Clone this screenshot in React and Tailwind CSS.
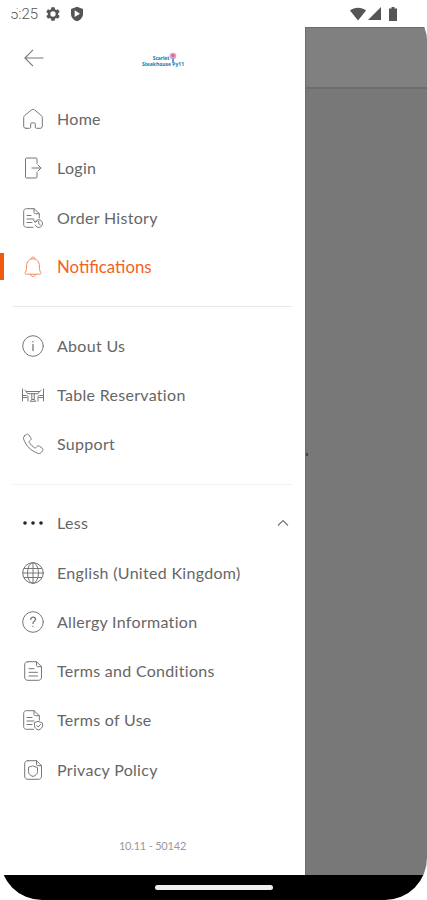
import React from "react";

function Icon({ children, className = "text-[#777]" }) {
  return (
    <svg
      viewBox="0 0 24 24"
      className={`h-6 w-6 shrink-0 ${className}`}
      fill="none"
      stroke="currentColor"
      strokeWidth="1"
      strokeLinecap="round"
      strokeLinejoin="round"
    >
      {children}
    </svg>
  );
}

const HomeIcon = () => (
  <Icon>
    <path d="M5 21.300h3.600c.8 0 1.100-.4 1.100-1.100v-3.400c0-.6.300-.9.900-.9h2.800c.6 0 .9.300.9.900v3.400c0 .7.300 1.100 1.100 1.100H19c1.500 0 2.300-.8 2.300-2.300v-8.500c0-.8-.3-1.400-.9-1.900l-6.700-5.600c-1.100-.9-2.300-.9-3.400 0L3.600 8.600c-.6.500-.9 1.100-.9 1.900V19c0 1.500.8 2.300 2.300 2.300z" />
  </Icon>
);
const LoginIcon = () => (
  <Icon>
    <path d="M16 7.500V3c0-.7-.4-1-1-1H5.500c-.7 0-1 .4-1 1v18c0 .6.400 1 1 1H15c.6 0 1-.4 1-1v-4.500M11 12h9M17 9l3 3-3 3" />
  </Icon>
);
const OrderIcon = () => (
  <Icon>
    <path d="M12 21.300H5.500c-1.800 0-2.800-1-2.800-2.800v-13c0-1.800 1-2.800 2.800-2.800H13l5.300 5V12M13 2.700v3.500c0 1 .5 1.500 1.500 1.500h3.800M6 9.500h4M6 13h7M6 16.500h5" />
    <path d="M14.500 15.200a3.900 3.900 0 1 1-.5 3.900M17.700 15.200v2.500l1.500 1M12.700 14.300l1.300 2 2-1.200" />
  </Icon>
);
const BellIcon = () => (
  <Icon className="text-[#f58a5c]">
    <path d="M5 19.200c-.9 0-1.300-1-.8-1.700 1.300-1.900 1.400-3.200 1.400-6.500 0-4.200 2.600-7.200 6.400-7.200s6.400 3 6.400 7.200c0 3.300.1 4.600 1.400 6.500.5.700.1 1.700-.8 1.700zM10 4c.1-2.700 3.900-2.700 4 0M9.500 19.500c.3 2.800 4.700 2.800 5 0" />
  </Icon>
);
const InfoIcon = () => (
  <Icon>
    <circle cx="12" cy="12" r="10.300" />
    <path d="M12 10.500v6M12 7.300v.5" strokeWidth="1.300" />
  </Icon>
);
const TableIcon = () => (
  <Icon>
    <path d="M1.500 6v12M1.500 12.500h4c1 0 1.500.5 1.500 1.500v4M1.500 14.500H6M22.500 6v12M22.500 12.500h-4c-1 0-1.500.5-1.500 1.500v4M22.500 14.500H18M5.500 8.500h13l-1.500 2.200H7zM10.800 10.700v5.800M13.200 10.700v5.800M9.500 18l1.300-1.500h2.400l1.300 1.500zM4 7.500l1.500 1M20 7.500l-1.500 1" />
  </Icon>
);
const PhoneIcon = () => (
  <Icon>
    <path d="M3.500 3.900 5.300 2.500c.8-.6 1.800-.5 2.400.3l2.100 2.900c.6.8.4 1.800-.3 2.400l-.9.700c-.6.500-.7 1.200-.2 1.900 1.400 2.100 3 3.700 5 5 .7.500 1.400.3 1.900-.3l.7-.9c.6-.8 1.600-.9 2.400-.3l2.900 2.100c.8.600.9 1.600.3 2.400l-1.400 1.800c-.8 1.100-2 1.300-3.400.8C9.900 18.800 5.200 14.100 2.700 7.200c-.5-1.400-.3-2.500.8-3.300z" />
  </Icon>
);
const DotsIcon = () => (
  <Icon className="text-[#222]">
    <g fill="currentColor" stroke="none">
      <circle cx="4" cy="12" r="1.800" />
      <circle cx="12" cy="12" r="1.800" />
      <circle cx="20" cy="12" r="1.800" />
    </g>
  </Icon>
);
const GlobeIcon = () => (
  <Icon>
    <circle cx="12" cy="12" r="10.300" />
    <ellipse cx="12" cy="12" rx="5.500" ry="10.300" />
    <path d="M12 1.700v20.600M1.700 12h20.600M3.300 7.500h17.400M3.300 16.500h17.400" />
  </Icon>
);
const HelpIcon = () => (
  <Icon>
    <circle cx="12" cy="12" r="10.300" />
    <path d="M9.700 9.500c0-3.300 4.800-3.100 4.800-.2 0 2-2.500 2.100-2.500 4.200M12 16.300v.3" strokeWidth="1.300" />
  </Icon>
);
const DocumentIcon = () => (
  <Icon>
    <path d="M7 2.700h8.500l5 5V18c0 2.300-1 3.300-3.300 3.300H7c-2.300 0-3.300-1-3.300-3.300V6c0-2.300 1-3.300 3.300-3.300zM15.500 2.700v3.500c0 1 .5 1.500 1.500 1.500h3.500M8 9.700h5M8 13.300h8.500M8 17h8.500" />
  </Icon>
);
const TermsIcon = () => (
  <Icon>
    <path d="M12.500 21.300h-7c-1.800 0-2.800-1-2.800-2.800v-13c0-1.800 1-2.800 2.800-2.800H13l5.300 5v4.500M13 2.700v3.500c0 1 .5 1.500 1.500 1.500h3.800M6 9.500h5M6 13h7M6 16.500h5" />
    <path d="m17.500 13.500 4 1.500v2.700c0 2-1.600 3.300-4 4.300-2.400-1-4-2.300-4-4.300V15zM15.700 17.700l1.400 1.300 2.500-2.700" />
  </Icon>
);
const PrivacyIcon = () => (
  <Icon>
    <path d="M7 2.700h8.500l5 5V18c0 2.300-1 3.300-3.300 3.300H7c-2.300 0-3.300-1-3.300-3.300V6c0-2.300 1-3.300 3.300-3.300zM15.500 2.700v3.500c0 1 .5 1.500 1.500 1.500h3.500" />
    <path d="m12 8 4.500 1.700v4c0 2.300-1.800 3.800-4.500 4.800-2.700-1-4.500-2.500-4.500-4.800v-4z" />
  </Icon>
);

function Row({ icon: Glyph, label, active, trailing }) {
  return (
    <li className="relative flex h-[49.300px] items-center pr-[14px] pl-[21px]">
      {active && <span className="absolute top-[11px] left-0 h-[27px] w-1 bg-[#f05a0c]" />}
      <Glyph />
      <span
        className={`ml-3 flex-1 whitespace-nowrap ${
          active ? "text-[16.800px] text-[#f26322]" : "text-base tracking-[0.3px] text-[#666]"
        }`}
      >
        {label}
      </span>
      {trailing}
    </li>
  );
}

const Chevron = () => (
  <svg viewBox="0 0 16 16" className="h-4 w-4 text-[#777]" fill="none" stroke="currentColor" strokeWidth="1.200">
    <path d="m3 10.500 5-5 5 5" />
  </svg>
);

function StatusBar() {
  return (
    <header className="flex h-[27px] items-center pl-[10px] text-[#555]">
      <span className="mt-0.5 w-[29px] font-[Roboto] text-[15px] font-light">5:25</span>
      <svg viewBox="0 0 24 24" className="ml-[6px] h-4 w-4" fill="currentColor">
        <path
          fillRule="evenodd"
          d="M9.500 2h5l.5 3 1.700 1 2.900-1.200 2.400 4.200-2.300 2v2l2.300 2-2.400 4.200-2.900-1.200-1.700 1-.5 3h-5L9 19l-1.700-1-2.900 1.200L2 15l2.300-2v-2L2 9l2.400-4.200L7.300 6 9 5zM12 8a4 4 0 1 0 0 8 4 4 0 0 0 0-8z"
        />
      </svg>
      <svg viewBox="0 0 24 24" className="ml-2 h-4 w-4" fill="currentColor">
        <path fillRule="evenodd" d="m12 1 9 3.500V12c0 5.200-4 9.300-9 11-5-1.700-9-5.800-9-11V4.500zM8.500 6.500v10l8-5z" />
      </svg>
      <span className="flex-1" />
      <svg viewBox="0 0 16 14" className="h-[14px] w-4" fill="currentColor">
        <path d="M0 3.500C4.500-.1 11.500-.1 16 3.500L8 13.500z" />
      </svg>
      <svg viewBox="0 0 13 13" className="ml-[2px] h-[13px] w-[13px]" fill="currentColor">
        <path d="M13 0v13H0z" />
      </svg>
      <svg viewBox="0 0 8 14" className="mr-[30px] ml-2 h-[14px] w-2" fill="currentColor">
        <path d="M2.500 0h3v1.500H8V14H0V1.500h2.500z" />
      </svg>
    </header>
  );
}

function Logo() {
  return (
    <div className="relative flex w-[44px] flex-col items-center font-['Open_Sans'] font-bold text-[#1478aa]">
      <span className="mr-1 h-[5px] text-[5px] leading-[5px] tracking-tight">Scarlet</span>
      <span className="h-[6px] text-[5px] leading-[6px] whitespace-nowrap">Steakhouse Py11</span>
      <svg viewBox="0 0 8 12" className="absolute -top-[4px] left-[28px] h-3 w-2">
        <circle cx="4" cy="4" r="3.300" fill="#d6a5ce" />
        <circle cx="4" cy="3.500" r="1.500" fill="#e85d96" />
        <path d="M3 6.500h2V11H3z" fill="#6b9bcc" />
      </svg>
    </div>
  );
}

export default function App() {
  return (
    <div className="h-[900px] w-[427px] bg-white">
      <div className="flex h-full flex-col overflow-hidden rounded-[42px] bg-white font-[Lato,sans-serif]">
        <StatusBar />
        <main className="flex h-[848px]">
          <nav className="flex w-[305px] flex-col bg-white">
            <div className="flex h-[67.500px] items-start">
              <svg viewBox="0 0 20 18" className="mt-[22px] ml-6 h-[18px] w-5 text-[#777]" fill="none" stroke="currentColor" strokeWidth="1.100">
                <path d="M9 .8.900 9 9 17.200M1 9h18.500" />
              </svg>
              <div className="mt-[29px] ml-[97px]">
                <Logo />
              </div>
            </div>
            <ul>
              <Row icon={HomeIcon} label="Home" />
              <Row icon={LoginIcon} label="Login" />
              <Row icon={OrderIcon} label="Order History" />
              <Row icon={BellIcon} label="Notifications" active />
            </ul>
            <hr className="mx-[13px] mt-[14.500px] mb-[14px] border-[#e8e8e8]" />
            <ul>
              <Row icon={InfoIcon} label="About Us" />
              <Row icon={TableIcon} label="Table Reservation" />
              <Row icon={PhoneIcon} label="Support" />
            </ul>
            <hr className="mx-[13px] mt-[15px] mb-[13.500px] border-[#f1f1f1]" />
            <ul>
              <Row icon={DotsIcon} label="Less" trailing={<Chevron />} />
              <Row icon={GlobeIcon} label="English (United Kingdom)" />
              <Row icon={HelpIcon} label="Allergy Information" />
              <Row icon={DocumentIcon} label="Terms and Conditions" />
              <Row icon={TermsIcon} label="Terms of Use" />
              <Row icon={PrivacyIcon} label="Privacy Policy" />
            </ul>
            <p className="mt-[43.500px] text-center text-[11px] tracking-[-0.2px] text-[#999]">10.11 - 50142</p>
          </nav>
          <div className="flex flex-1 flex-col border-t border-l border-[#6c6c6c] bg-[#787878]">
            <div className="h-[61px] border-b-2 border-[#6d6d6d] bg-[#808080]" />
            <div className="mt-[364px] h-[3px] w-[2px] bg-[#444]" />
          </div>
        </main>
        <footer className="flex flex-1 justify-center bg-black pt-[10px]">
          <div className="h-[5px] w-[118px] rounded-sm bg-[#eee]" />
        </footer>
      </div>
    </div>
  );
}
